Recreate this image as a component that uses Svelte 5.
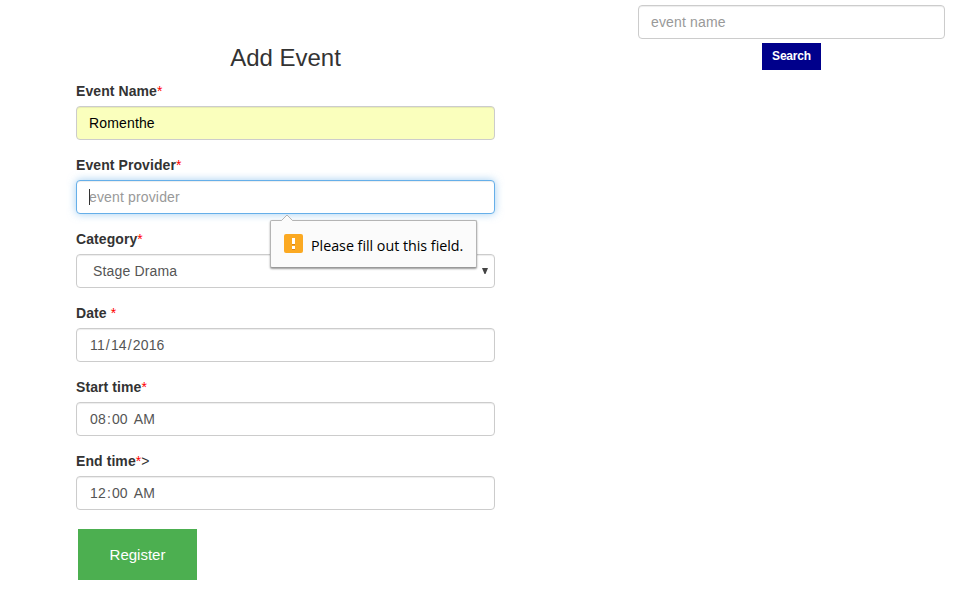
<script>
  let eventName = $state('Romenthe');
  let provider = $state('');
  let query = $state('');
  const date = ['11', '/', '14', '/', '2016'];
  const start = ['08', ':', '00', ' ', 'AM'];
  const end = ['12', ':', '00', ' ', 'AM'];
</script>

{#snippet segments(parts)}
  <div class="control segmented">
    {#each parts as part, i}<span class:segment={i % 2 === 0}>{part}</span>{/each}
  </div>
{/snippet}

<div class="page">
  <main>
    <h3>Add Event</h3>
    <div class="group">
      <div class="label"><b>Event Name</b><i>*</i></div>
      <input class="control filled" bind:value={eventName} aria-label="Event Name" />
    </div>
    <div class="group">
      <div class="label"><b>Event Provider</b><i>*</i></div>
      <div class="anchor">
        <input class="control focused" placeholder="event provider" bind:value={provider} aria-label="Event Provider" />
        <span class="caret"></span>
        <div class="bubble">
          <svg class="arrow" width="14" height="8" viewBox="0 0 14 8">
            <path d="M1 7 L7 1 L13 7 V8 H1Z" fill="#fbfbfb" />
            <path d="M0.5 6.5 H1.5 L7 1 L12.5 6.5 H13.5" fill="none" stroke="#b4b4b4" />
          </svg>
          <svg class="warn" width="19" height="19" viewBox="0 0 19 19">
            <rect width="19" height="19" rx="2" fill="#fba922" />
            <rect x="8" y="4" width="3" height="6" fill="#fff" />
            <rect x="8" y="12" width="3" height="3" fill="#fff" />
            <path d="M8 10.5h3M8 15.5h3" stroke="#d9851c" />
          </svg>
          <span>Please fill out this field.</span>
        </div>
      </div>
    </div>
    <div class="group">
      <div class="label"><b>Category</b><i>*</i></div>
      <div class="control select">
        <span>Stage Drama</span>
        <svg width="6" height="6" viewBox="0 0 6 6"><path d="M0 0H6L3.5 6H2.5Z" fill="#444" /></svg>
      </div>
    </div>
    <div class="group">
      <div class="label"><b>Date</b>{' '}<i>*</i></div>
      {@render segments(date)}
    </div>
    <div class="group">
      <div class="label"><b>Start time</b><i>*</i></div>
      {@render segments(start)}
    </div>
    <div class="group">
      <div class="label"><b>End time</b><i>*</i>&gt;</div>
      {@render segments(end)}
    </div>
    <button class="register">Register</button>
  </main>
  <aside>
    <input class="control" placeholder="event name" bind:value={query} aria-label="Search events" />
    <button class="search">Search</button>
  </aside>
</div>

<style>
  :global(body) {
    background: #fff;
  }
  .page {
    box-sizing: border-box;
    width: 953px;
    height: 598px;
    display: flex;
    justify-content: space-between;
    padding: 5px 8px 0 76px;
    overflow: hidden;
    font: 14px/20px 'Liberation Sans', Arial, sans-serif;
    color: #333;
  }
  main {
    width: 419px;
    padding-top: 40px;
  }
  h3 {
    margin: 0 0 10px;
    font-size: 24px;
    line-height: 26px;
    font-weight: 400;
    text-align: center;
  }
  .group {
    margin-bottom: 15px;
  }
  .label {
    height: 20px;
    margin-bottom: 5px;
    white-space: pre;
    letter-spacing: 0.08px;
  }
  .label i {
    color: #f00;
    font-style: normal;
  }
  .control {
    box-sizing: border-box;
    display: block;
    width: 100%;
    height: 34px;
    margin: 0;
    padding: 6px 12px;
    border: 1px solid #ccc;
    border-radius: 4px;
    background: #fff;
    box-shadow: inset 0 1px 1px rgba(0, 0, 0, 0.075);
    font: inherit;
    letter-spacing: 0.15px;
    color: #555;
    outline: none;
  }
  .control::placeholder {
    color: #999;
    opacity: 1;
  }
  .filled {
    background: #faffbd;
    color: #000;
  }
  .focused {
    border-color: #66afe9;
    box-shadow: inset 0 1px 1px rgba(0, 0, 0, 0.075), 0 0 8px rgba(102, 175, 233, 0.6);
  }
  .segmented {
    white-space: pre;
  }
  .segment {
    padding: 0 1px;
  }
  .select {
    display: flex;
    align-items: center;
    justify-content: space-between;
    padding: 6px 6px 6px 16px;
  }
  .anchor {
    position: relative;
  }
  .caret {
    position: absolute;
    left: 13px;
    top: 9px;
    width: 1px;
    height: 16px;
    background: #333;
  }
  .bubble {
    position: absolute;
    z-index: 1;
    left: 194px;
    top: 40px;
    box-sizing: border-box;
    width: 207px;
    height: 48px;
    display: flex;
    align-items: center;
    gap: 8px;
    padding-left: 13px;
    border: 1px solid #b4b4b4;
    border-bottom-color: #999;
    border-radius: 2px;
    background: #fbfbfb;
    box-shadow: 0 1px 2px rgba(0, 0, 0, 0.4);
    color: #000;
    font: 14.3px/20px 'Open Sans', 'Noto Sans', sans-serif;
    white-space: nowrap;
  }
  .bubble span {
    padding-top: 3px;
    letter-spacing: -0.02px;
  }
  .arrow {
    position: absolute;
    left: 9px;
    top: -7px;
  }
  .warn {
    flex: none;
    margin-bottom: 2px;
  }
  button {
    display: block;
    border: 0;
    padding: 0;
    color: #fff;
    font-family: inherit;
  }
  .register {
    width: 119px;
    height: 51px;
    margin: 19px 0 0 2px;
    background: #4caf50;
    font-size: 15px;
  }
  aside {
    width: 307px;
  }
  .search {
    width: 59px;
    height: 27px;
    margin: 4px auto 0;
    padding-bottom: 1px;
    background: #00008b;
    font-size: 12px;
    font-weight: 700;
    letter-spacing: -0.2px;
  }
</style>
